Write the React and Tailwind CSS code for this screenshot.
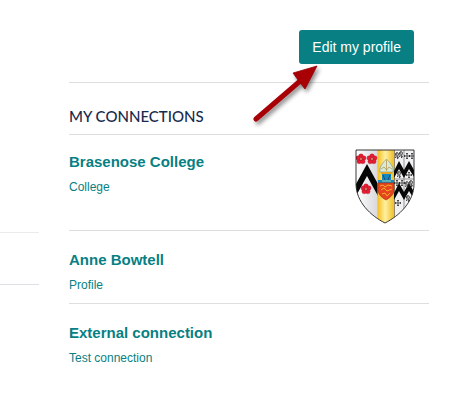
import React from "react";

const connections = [
  { name: "Brasenose College", kind: "College", crest: true },
  { name: "Anne Bowtell", kind: "Profile" },
  { name: "External connection", kind: "Test connection" },
];

function Rose({ x, y }) {
  return (
    <g transform={`translate(${x} ${y})`}>
      <g fill="#ee1a33" stroke="#8b1020" strokeWidth="0.3">
        <circle cx="0" cy="-2.9" r="2.3" />
        <circle cx="2.8" cy="-0.9" r="2.3" />
        <circle cx="1.8" cy="2.5" r="2.3" />
        <circle cx="-1.8" cy="2.5" r="2.3" />
        <circle cx="-2.8" cy="-0.9" r="2.3" />
      </g>
      <circle r="1.4" fill="#f0a070" stroke="#801020" strokeWidth="0.6" />
    </g>
  );
}

function Cross({ x, y }) {
  return (
    <g transform={`translate(${x} ${y})`} stroke="#222" strokeWidth="0.7">
      <path d="M-3 0H3M0 -3V3" />
      <path d="M-2.4 -1V1M2.4 -1V1M-1 -2.4H1M-1 2.4H1" strokeWidth="0.8" />
    </g>
  );
}

function Griffin({ x, y }) {
  return (
    <g transform={`translate(${x} ${y})`} fill="none" stroke="#222">
      <path d="M-1.5 3C0 1 -2 0 -1 -2C1 -3 2 -1 1 0C0 2 2 3 0 4" strokeWidth="1" />
      <path d="M-2 -1L0 0M0 2L2 3" strokeWidth="0.6" />
    </g>
  );
}

function Crest() {
  return (
    <svg className="h-[75px] w-[60px]" viewBox="-1 -1 60 75" role="img" aria-label="Brasenose College crest">
      <defs>
        <clipPath id="shield">
          <path d="M0 0H58V34C58 52 43 66 29 73C15 66 0 52 0 34Z" />
        </clipPath>
        <linearGradient id="gold">
          <stop offset="0" stopColor="#f4bd20" />
          <stop offset="0.45" stopColor="#fff0a0" />
          <stop offset="1" stopColor="#eebb22" />
        </linearGradient>
        <linearGradient id="silver">
          <stop offset="0" stopColor="#ffffff" />
          <stop offset="1" stopColor="#d8d8dc" />
        </linearGradient>
      </defs>
      <g clipPath="url(#shield)">
        <rect width="58" height="73" fill="#f1f1f3" />
        <rect width="22" height="73" fill="url(#silver)" />
        <path d="M11 14L22 34V46L11 26L0 46V34Z" fill="#050505" />
        <Rose x={5} y={9} />
        <Rose x={16} y={9} />
        <Rose x={10} y={39} />
        <rect x="21.5" width="17" height="73" fill="url(#gold)" />
        <path d="M22 30H26V23H35V30H38V42H35V35H26V42H22Z" fill="#1688bd" />
        <path d="M24 22C23 16 28 12 30.5 9C33 12 38 16 37 22Z" fill="#d9ead9" stroke="#8a9a80" strokeWidth="0.7" />
        <path d="M30.5 10V21M25 19L28 17L30.5 20L33 17L36 19" stroke="#ba9850" strokeWidth="0.8" fill="none" />
        <path d="M25 23H36" stroke="#e2a624" strokeWidth="1.8" />
        <path d="M27 25L29 30M34 25L32 30" stroke="#164b76" />
        <path d="M26 31H35" stroke="#5ab0bc" strokeWidth="2" />
        <path d="M22 33H38V41C37 45 34 48 30 50C26 48 23 45 22 41Z" fill="#e3461c" stroke="#b92b12" strokeWidth="0.7" />
        <path d="M24 36L27 35L29 37L32 35L36 36M25 40L28 38L31 41L36 39M26 44L29 43L31 46L34 43" stroke="#ffb52e" strokeWidth="0.9" fill="none" />
        <path d="M38.5 0V73M48 0V62M38 29H58" stroke="#555" strokeWidth="0.6" />
        <path d="M38 21L43 11L48 20L53 11L58 20V27L53 19L48 28L43 19L38 28Z" fill="#080808" />
        <path d="M38 43L43 33L48 42L53 33L58 42V49L53 41L48 50L43 41L38 50Z" fill="#080808" />
        <Griffin x={41} y={5} />
        <Griffin x={45} y={4} />
        <Griffin x={43} y={24} />
        <Griffin x={51} y={34} />
        <Griffin x={55} y={33} />
        <Griffin x={52} y={48} />
        <Cross x={51} y={6} />
        <Cross x={56} y={6} />
        <Cross x={53} y={25} />
        <Cross x={41} y={33} />
        <Cross x={46} y={33} />
        <Cross x={42} y={53} />
      </g>
      <path d="M0 0H58V34C58 52 43 66 29 73C15 66 0 52 0 34Z" fill="none" stroke="#222" strokeWidth="0.9" />
    </svg>
  );
}

function Arrow() {
  return (
    <svg
      className="pointer-events-none absolute top-8 right-[90px] h-16 w-20 drop-shadow-[2px_3px_2px_rgba(0,0,0,0.45)]"
      viewBox="0 0 80 64"
      aria-hidden="true"
    >
      <path d="M12 57L55 20" stroke="#a90005" strokeWidth="5" strokeLinecap="round" />
      <path d="M73 4L49 11L54 18L57 22L61 27Z" fill="#a90005" stroke="#940005" strokeWidth="0.8" />
    </svg>
  );
}

export default function App() {
  return (
    <div className="flex min-h-screen gap-[30px] bg-white pr-9 font-['Liberation_Sans',Arial,sans-serif] text-[#077f83]">
      <aside className="w-[39px] shrink-0 pt-[232px]">
        <hr className="border-[#ebebeb]" />
        <hr className="mt-[51px] border-[#dedee6]" />
      </aside>
      <main className="min-w-0 flex-1">
        <header className="border-b border-[#dedede] pt-[30px] pr-[15px] pb-[18px]">
          <div className="relative flex justify-end">
            <button type="button" className="h-[34px] rounded-[3px] bg-[#077f83] px-[13px] text-sm text-white">
              Edit my profile
            </button>
            <Arrow />
          </div>
        </header>
        <section aria-labelledby="connections">
          <h2
            id="connections"
            className="border-b border-[#dedede] pt-[23px] pb-2 font-[Lato,sans-serif] text-[15px] leading-5 font-medium text-[#172b4d]"
          >
            MY CONNECTIONS
          </h2>
          <ul>
            {connections.map((item) => (
              <li
                key={item.name}
                className="flex justify-between border-b border-[#dedede] pt-[19px] pr-[14px] pb-[9px] first:pt-[17px] first:pb-0 last:border-b-0"
              >
                <div>
                  <h3 className="text-[15px] leading-5 font-bold">
                    <a href="#profile">{item.name}</a>
                  </h3>
                  <p className="mt-[7px] text-xs leading-[17px]">{item.kind}</p>
                </div>
                {item.crest && (
                  <div className="-mt-[3px] pb-[6px]">
                    <Crest />
                  </div>
                )}
              </li>
            ))}
          </ul>
        </section>
      </main>
    </div>
  );
}
